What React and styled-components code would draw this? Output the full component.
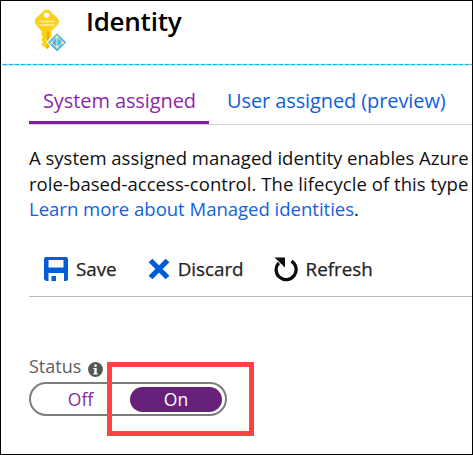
import React from 'react';
import styled, { createGlobalStyle } from 'styled-components';

const GlobalStyle = createGlobalStyle`
  * { box-sizing: border-box; }
  body { margin: 0; background: #fff; }
`;

const Blade = styled.main`
  position: relative;
  width: 473px;
  height: 455px;
  overflow: hidden;
  border: 1px solid #000;
  background: #fff;
  font-family: "Open Sans", "Noto Sans", sans-serif;
  color: #111;
  white-space: nowrap;
`;

const Header = styled.header`
  display: flex;
  height: 65px;
  padding: 8px 0 0 33px;
`;

const Title = styled.h1`
  margin: -6px 0 0 18px;
  font-size: 26px;
  line-height: 36px;
  font-weight: 600;
  letter-spacing: -0.25px;
  color: #000;
`;

const Divider = styled.div`
  height: 1px;
  margin: -2px 0 0 1px;
  background: repeating-linear-gradient(90deg, #a6d9e6 0 1px, #00b9f1 1px 5px, #a6d9e6 5px 6px);
  box-shadow: 0 1px 0 #d8eef5, 0 -1px 0 #edf8fb;
`;

const Body = styled.section`
  padding-left: 28px;
`;

const Tabs = styled.nav`
  display: flex;
  height: 60px;
  border-bottom: 1px solid #d2d2d4;
`;

const Tab = styled.button`
  width: ${(p) => (p.$active ? 180 : 260)}px;
  padding: 22px 0 0 ${(p) => (p.$active ? 14 : 18)}px;
  border: 0;
  border-bottom: ${(p) => (p.$active ? '3px solid #871ba3' : '0')};
  background: none;
  font: 400 20px/28px "Open Sans", sans-serif;
  letter-spacing: -0.1px;
  color: ${(p) => (p.$active ? '#8d28a8' : '#0f5fdc')};
  text-align: left;
  display: flex;
`;

const Description = styled.p`
  margin: 20px 0 0;
  font-size: 18.5px;
  line-height: 25.7px;
`;

const WideLine = styled.span`
  letter-spacing: 0.06px;
`;

const Link = styled.a`
  color: #0f62e6;
`;

const Toolbar = styled.div`
  display: flex;
  height: 75px;
  padding-top: 35px;
  border-bottom: 1px solid #bcbcbc;
`;

const Command = styled.button`
  display: flex;
  align-items: center;
  height: 24px;
  gap: ${(p) => p.$gap}px;
  margin-left: ${(p) => p.$offset}px;
  padding: 0;
  border: 0;
  background: none;
  font: 400 18.8px/24px "Open Sans", sans-serif;
  color: #222;
  -webkit-text-stroke: 0.25px #222;
`;

const StatusLabel = styled.div`
  display: flex;
  align-items: center;
  gap: 7px;
  height: 26px;
  margin-top: 56px;
  font-size: 18px;
  color: #606060;

  svg { margin-top: 6px; }
`;

const Toggle = styled.div`
  display: flex;
  align-items: center;
  width: 198px;
  height: 34px;
  margin-top: 3px;
  padding: 3px;
  border: 2px solid #7d7d7d;
  border-radius: 17px;
`;

const Option = styled.span`
  width: ${(p) => (p.$on ? 92 : 96)}px;
  height: 25px;
  padding-right: ${(p) => (p.$on ? 0 : 3)}px;
  border-radius: 13px;
  background: ${(p) => (p.$on ? '#68217a' : 'transparent')};
  color: ${(p) => (p.$on ? '#fff' : '#803092')};
  font-size: 17.5px;
  line-height: 25px;
  text-align: center;
`;

const Highlight = styled.div`
  position: absolute;
  left: 106px;
  top: 361px;
  width: 147px;
  height: 74px;
  border: 5px solid #ff4343;
`;

const KeyIcon = () => (
  <svg width="34" height="44" viewBox="0 0 34 44">
    <path fillRule="evenodd" fill="#fcd116" d="M10.500 1.200Q13 0 15.400 1.200L23.700 9.300Q26 12 24 15.200L17.500 22V35L13 40L7.500 35.500L9 33L7.200 30.500L9 28L7.200 25.500L7.500 22L1.500 15.200Q0 12 1.700 9.300ZM12.700 3.400a2.800 2.800 0 1 0 .01 0Z" />
    <path fill="#e8ae00" d="M13 22.500h2v16l-2 1.500z" />
    <path stroke="#fff0a5" strokeWidth="1.400" d="M5.500 12.500h15M5.500 16h15" />
    <path fill="#fff" d="m23 22.500 11 10.500-11 11-11-11z" />
    <path fill="#59b4d9" stroke="#59b4d9" strokeLinejoin="round" d="m23 24.800 8.700 8.500-8.700 8.700-8.700-8.700z" />
    <path fill="none" stroke="#d9f2fb" strokeWidth="1" d="m23 27.500-6 6 6 5 6-5zM23 27v11" />
    <g fill="#edf2a0">
      <circle cx="23" cy="28" r="1.400" />
      <circle cx="17.500" cy="33.800" r="1.400" />
      <circle cx="28.500" cy="33.800" r="1.400" />
      <circle cx="23" cy="38" r="1.400" />
    </g>
  </svg>
);

const SaveIcon = () => (
  <svg width="24" height="24" viewBox="0 0 24 24">
    <path fill="#015cda" fillRule="evenodd" d="M2 0H22Q24 0 24 2V22Q24 24 22 24H20V16H4.500V24H2L0 22V2Q0 0 2 0ZM4.500 3V10.500H19.500V3Z" />
    <path fill="#015cda" d="M7.500 19h4.500v5H7.500z" />
  </svg>
);

const DiscardIcon = () => (
  <svg width="22" height="22" viewBox="0 0 22 22">
    <path stroke="#015cda" strokeWidth="5.300" d="m2.500 2.500 17 17m0-17-17 17" />
  </svg>
);

const RefreshIcon = () => (
  <svg width="24" height="25" viewBox="0 0 24 25">
    <path fill="none" stroke="#0c0c0c" strokeWidth="3.300" d="M17.500 4.200A10 10 0 1 1 4.800 5.800" />
    <path fill="#0c0c0c" d="M.500.500H11V10.500Z" />
  </svg>
);

const InfoIcon = () => (
  <svg width="15" height="15" viewBox="0 0 15 15">
    <circle cx="7.500" cy="7.500" r="7.400" fill="#555" />
    <path fill="#fff" d="M6.300 2.500h2.400v2.200H6.300zM5.300 6h3.400v5.200h1v1.200H5.300v-1.200h1V7.200h-1z" />
  </svg>
);

export default function App() {
  return (
    <>
      <GlobalStyle />
      <Blade>
        <Header>
          <KeyIcon />
          <Title>Identity</Title>
        </Header>
        <Divider />
        <Body>
          <Tabs>
            <Tab $active>System assigned</Tab>
            <Tab>User assigned (preview)</Tab>
          </Tabs>
          <Description>
            A system assigned managed identity enables Azure
            <br />
            <WideLine>role-based-access-control. The lifecycle of this type</WideLine>
            <br />
            <Link>Learn more about Managed identities</Link>.
          </Description>
          <Toolbar>
            <Command $offset={15} $gap={8}><SaveIcon />Save</Command>
            <Command $offset={31} $gap={8}><DiscardIcon />Discard</Command>
            <Command $offset={30} $gap={8}><RefreshIcon />Refresh</Command>
          </Toolbar>
          <StatusLabel>Status<InfoIcon /></StatusLabel>
          <Toggle>
            <Option>Off</Option>
            <Option $on>On</Option>
          </Toggle>
        </Body>
        <Highlight />
      </Blade>
    </>
  );
}
